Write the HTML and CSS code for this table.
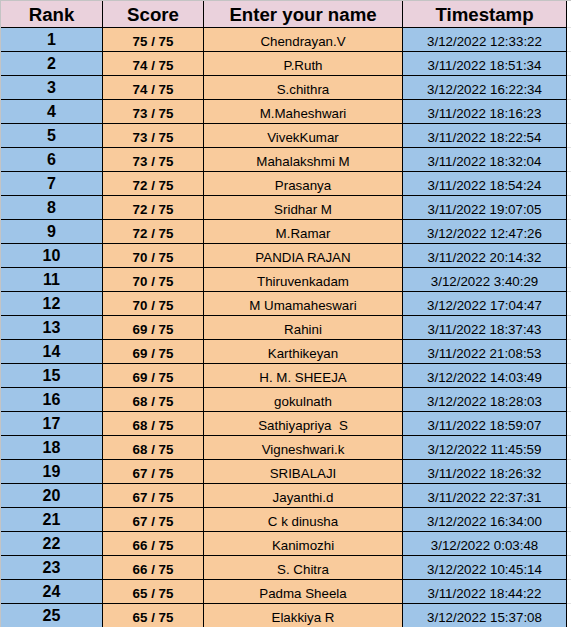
FILE: index.html
```html
<!DOCTYPE html>
<html>
<head>
<meta charset="utf-8">
<link rel="stylesheet" href="styles.css">
</head>
<body>
<div class="sheet">
  <div class="c head">Rank</div><div class="c head">Score</div><div class="c head">Enter your name</div><div class="c head">Timestamp</div><div class="c pad"></div>
  <div class="c rank">1</div><div class="c score">75 / 75</div><div class="c name">Chendrayan.V</div><div class="c time">3/12/2022 12:33:22</div><div class="c pad"></div>
  <div class="c rank">2</div><div class="c score">74 / 75</div><div class="c name">P.Ruth</div><div class="c time">3/11/2022 18:51:34</div><div class="c pad"></div>
  <div class="c rank">3</div><div class="c score">74 / 75</div><div class="c name">S.chithra</div><div class="c time">3/12/2022 16:22:34</div><div class="c pad"></div>
  <div class="c rank">4</div><div class="c score">73 / 75</div><div class="c name">M.Maheshwari</div><div class="c time">3/11/2022 18:16:23</div><div class="c pad"></div>
  <div class="c rank">5</div><div class="c score">73 / 75</div><div class="c name">VivekKumar</div><div class="c time">3/11/2022 18:22:54</div><div class="c pad"></div>
  <div class="c rank">6</div><div class="c score">73 / 75</div><div class="c name">Mahalakshmi M</div><div class="c time">3/11/2022 18:32:04</div><div class="c pad"></div>
  <div class="c rank">7</div><div class="c score">72 / 75</div><div class="c name">Prasanya</div><div class="c time">3/11/2022 18:54:24</div><div class="c pad"></div>
  <div class="c rank">8</div><div class="c score">72 / 75</div><div class="c name">Sridhar M</div><div class="c time">3/11/2022 19:07:05</div><div class="c pad"></div>
  <div class="c rank">9</div><div class="c score">72 / 75</div><div class="c name">M.Ramar</div><div class="c time">3/12/2022 12:47:26</div><div class="c pad"></div>
  <div class="c rank">10</div><div class="c score">70 / 75</div><div class="c name">PANDIA RAJAN</div><div class="c time">3/11/2022 20:14:32</div><div class="c pad"></div>
  <div class="c rank">11</div><div class="c score">70 / 75</div><div class="c name">Thiruvenkadam</div><div class="c time">3/12/2022 3:40:29</div><div class="c pad"></div>
  <div class="c rank">12</div><div class="c score">70 / 75</div><div class="c name">M Umamaheswari</div><div class="c time">3/12/2022 17:04:47</div><div class="c pad"></div>
  <div class="c rank">13</div><div class="c score">69 / 75</div><div class="c name">Rahini</div><div class="c time">3/11/2022 18:37:43</div><div class="c pad"></div>
  <div class="c rank">14</div><div class="c score">69 / 75</div><div class="c name">Karthikeyan</div><div class="c time">3/11/2022 21:08:53</div><div class="c pad"></div>
  <div class="c rank">15</div><div class="c score">69 / 75</div><div class="c name">H. M. SHEEJA</div><div class="c time">3/12/2022 14:03:49</div><div class="c pad"></div>
  <div class="c rank">16</div><div class="c score">68 / 75</div><div class="c name">gokulnath</div><div class="c time">3/12/2022 18:28:03</div><div class="c pad"></div>
  <div class="c rank">17</div><div class="c score">68 / 75</div><div class="c name">Sathiyapriya  S</div><div class="c time">3/11/2022 18:59:07</div><div class="c pad"></div>
  <div class="c rank">18</div><div class="c score">68 / 75</div><div class="c name">Vigneshwari.k</div><div class="c time">3/12/2022 11:45:59</div><div class="c pad"></div>
  <div class="c rank">19</div><div class="c score">67 / 75</div><div class="c name">SRIBALAJI</div><div class="c time">3/11/2022 18:26:32</div><div class="c pad"></div>
  <div class="c rank">20</div><div class="c score">67 / 75</div><div class="c name">Jayanthi.d</div><div class="c time">3/11/2022 22:37:31</div><div class="c pad"></div>
  <div class="c rank">21</div><div class="c score">67 / 75</div><div class="c name">C k dinusha</div><div class="c time">3/12/2022 16:34:00</div><div class="c pad"></div>
  <div class="c rank">22</div><div class="c score">66 / 75</div><div class="c name">Kanimozhi</div><div class="c time">3/12/2022 0:03:48</div><div class="c pad"></div>
  <div class="c rank">23</div><div class="c score">66 / 75</div><div class="c name">S. Chitra</div><div class="c time">3/12/2022 10:45:14</div><div class="c pad"></div>
  <div class="c rank">24</div><div class="c score">65 / 75</div><div class="c name">Padma Sheela</div><div class="c time">3/11/2022 18:44:22</div><div class="c pad"></div>
  <div class="c rank">25</div><div class="c score">65 / 75</div><div class="c name">Elakkiya R</div><div class="c time">3/12/2022 15:37:08</div><div class="c pad"></div>
</div>
</body>
</html>
```

FILE: styles.css
```css
html, body {
  margin: 0;
  padding: 0;
  background: #ffffff;
}
body {
  font-family: "Liberation Sans", Arial, sans-serif;
  color: #000;
  overflow: hidden;
}
.sheet {
  display: grid;
  grid-template-columns: 102px 101px 199px 164px 1fr;
  grid-auto-rows: 24px;
  grid-template-rows: 27px;
  border-top: 1px solid #c4c4c4;
  border-left: 1px solid #c4c4c4;
}
.c {
  box-sizing: border-box;
  border-right: 1px solid #000;
  border-bottom: 1px solid #000;
  display: flex;
  align-items: center;
  justify-content: center;
  white-space: pre;
  font-size: 10pt;
  padding-top: 3px;
}
.head {
  background: #ead1dc;
  font-size: 14pt;
  font-weight: bold;
  padding-top: 1px;
}
.rank {
  background: #9fc5e8;
  font-size: 12pt;
  font-weight: bold;
  padding-top: 1px;
}
.score {
  background: #f9cb9c;
  font-weight: bold;
}
.name {
  background: #f9cb9c;
}
.time {
  background: #9fc5e8;
}
.pad {
  border-right: none;
  border-bottom: 1px solid #e2e2e2;
  background: #fff;
}
```
